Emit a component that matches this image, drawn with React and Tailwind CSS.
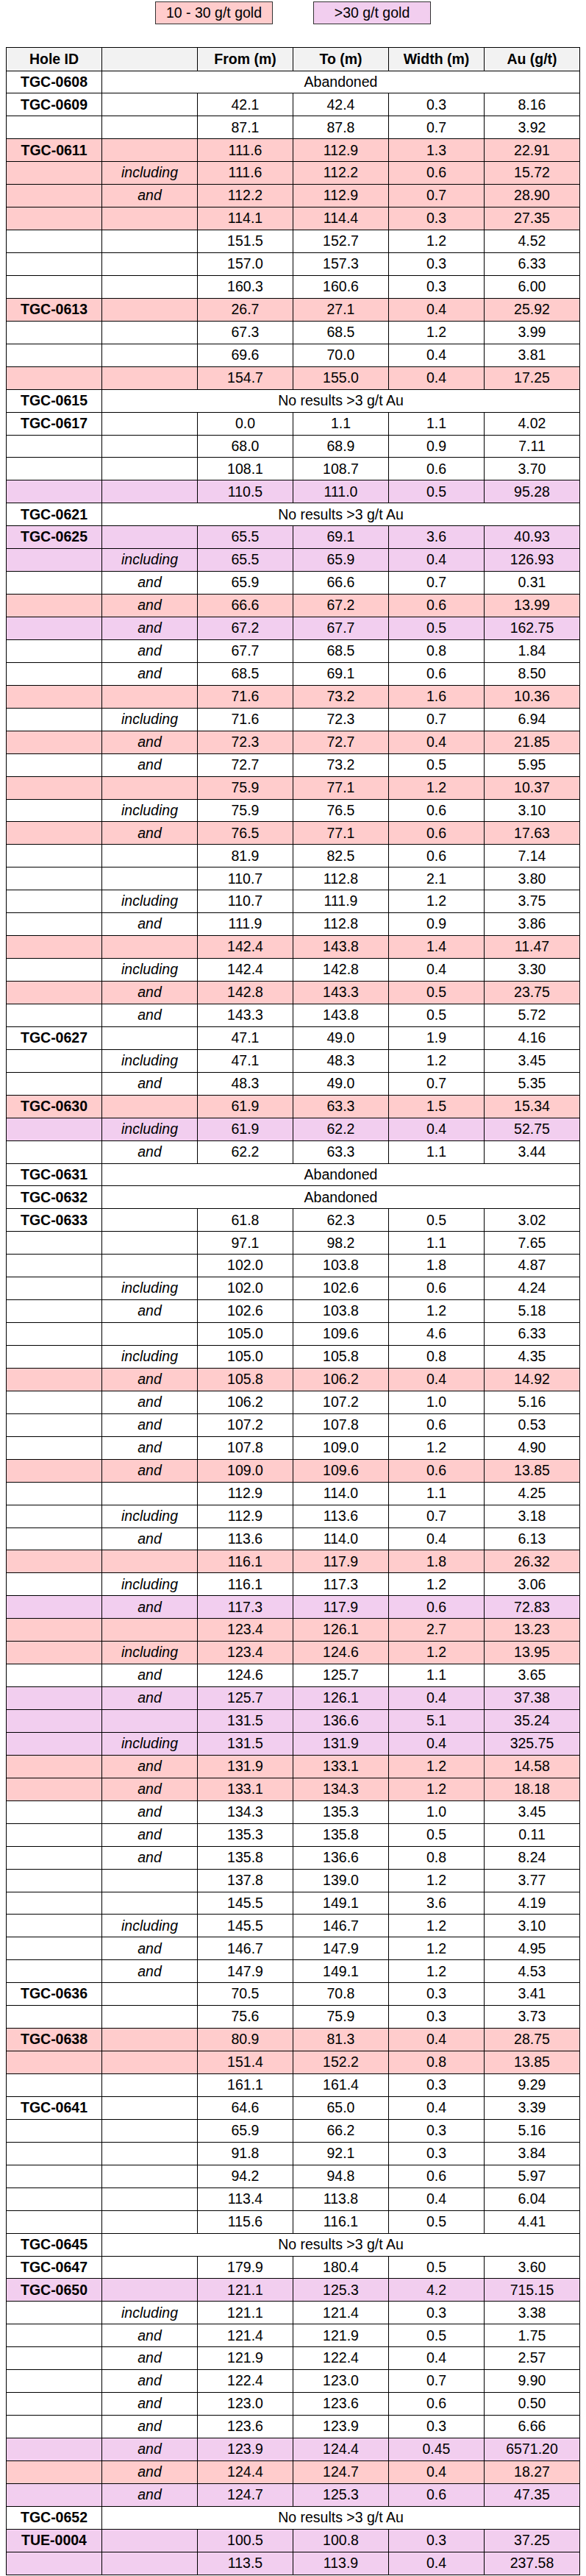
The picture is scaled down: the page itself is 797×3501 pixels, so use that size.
import React from "react";

// [hole, label, from, to, width, au, colour]  colour: p = 10-30 g/t, v = >30 g/t
// rows with a note instead of numbers: [hole, note]
const rows = [
  ["TGC-0608", "Abandoned"],
  ["TGC-0609", "", "42.1", "42.4", "0.3", "8.16", ""],
  ["", "", "87.1", "87.8", "0.7", "3.92", ""],
  ["TGC-0611", "", "111.6", "112.9", "1.3", "22.91", "p"],
  ["", "including", "111.6", "112.2", "0.6", "15.72", "p"],
  ["", "and", "112.2", "112.9", "0.7", "28.90", "p"],
  ["", "", "114.1", "114.4", "0.3", "27.35", "p"],
  ["", "", "151.5", "152.7", "1.2", "4.52", ""],
  ["", "", "157.0", "157.3", "0.3", "6.33", ""],
  ["", "", "160.3", "160.6", "0.3", "6.00", ""],
  ["TGC-0613", "", "26.7", "27.1", "0.4", "25.92", "p"],
  ["", "", "67.3", "68.5", "1.2", "3.99", ""],
  ["", "", "69.6", "70.0", "0.4", "3.81", ""],
  ["", "", "154.7", "155.0", "0.4", "17.25", "p"],
  ["TGC-0615", "No results >3 g/t Au"],
  ["TGC-0617", "", "0.0", "1.1", "1.1", "4.02", ""],
  ["", "", "68.0", "68.9", "0.9", "7.11", ""],
  ["", "", "108.1", "108.7", "0.6", "3.70", ""],
  ["", "", "110.5", "111.0", "0.5", "95.28", "v"],
  ["TGC-0621", "No results >3 g/t Au"],
  ["TGC-0625", "", "65.5", "69.1", "3.6", "40.93", "v"],
  ["", "including", "65.5", "65.9", "0.4", "126.93", "v"],
  ["", "and", "65.9", "66.6", "0.7", "0.31", ""],
  ["", "and", "66.6", "67.2", "0.6", "13.99", "p"],
  ["", "and", "67.2", "67.7", "0.5", "162.75", "v"],
  ["", "and", "67.7", "68.5", "0.8", "1.84", ""],
  ["", "and", "68.5", "69.1", "0.6", "8.50", ""],
  ["", "", "71.6", "73.2", "1.6", "10.36", "p"],
  ["", "including", "71.6", "72.3", "0.7", "6.94", ""],
  ["", "and", "72.3", "72.7", "0.4", "21.85", "p"],
  ["", "and", "72.7", "73.2", "0.5", "5.95", ""],
  ["", "", "75.9", "77.1", "1.2", "10.37", "p"],
  ["", "including", "75.9", "76.5", "0.6", "3.10", ""],
  ["", "and", "76.5", "77.1", "0.6", "17.63", "p"],
  ["", "", "81.9", "82.5", "0.6", "7.14", ""],
  ["", "", "110.7", "112.8", "2.1", "3.80", ""],
  ["", "including", "110.7", "111.9", "1.2", "3.75", ""],
  ["", "and", "111.9", "112.8", "0.9", "3.86", ""],
  ["", "", "142.4", "143.8", "1.4", "11.47", "p"],
  ["", "including", "142.4", "142.8", "0.4", "3.30", ""],
  ["", "and", "142.8", "143.3", "0.5", "23.75", "p"],
  ["", "and", "143.3", "143.8", "0.5", "5.72", ""],
  ["TGC-0627", "", "47.1", "49.0", "1.9", "4.16", ""],
  ["", "including", "47.1", "48.3", "1.2", "3.45", ""],
  ["", "and", "48.3", "49.0", "0.7", "5.35", ""],
  ["TGC-0630", "", "61.9", "63.3", "1.5", "15.34", "p"],
  ["", "including", "61.9", "62.2", "0.4", "52.75", "v"],
  ["", "and", "62.2", "63.3", "1.1", "3.44", ""],
  ["TGC-0631", "Abandoned"],
  ["TGC-0632", "Abandoned"],
  ["TGC-0633", "", "61.8", "62.3", "0.5", "3.02", ""],
  ["", "", "97.1", "98.2", "1.1", "7.65", ""],
  ["", "", "102.0", "103.8", "1.8", "4.87", ""],
  ["", "including", "102.0", "102.6", "0.6", "4.24", ""],
  ["", "and", "102.6", "103.8", "1.2", "5.18", ""],
  ["", "", "105.0", "109.6", "4.6", "6.33", ""],
  ["", "including", "105.0", "105.8", "0.8", "4.35", ""],
  ["", "and", "105.8", "106.2", "0.4", "14.92", "p"],
  ["", "and", "106.2", "107.2", "1.0", "5.16", ""],
  ["", "and", "107.2", "107.8", "0.6", "0.53", ""],
  ["", "and", "107.8", "109.0", "1.2", "4.90", ""],
  ["", "and", "109.0", "109.6", "0.6", "13.85", "p"],
  ["", "", "112.9", "114.0", "1.1", "4.25", ""],
  ["", "including", "112.9", "113.6", "0.7", "3.18", ""],
  ["", "and", "113.6", "114.0", "0.4", "6.13", ""],
  ["", "", "116.1", "117.9", "1.8", "26.32", "p"],
  ["", "including", "116.1", "117.3", "1.2", "3.06", ""],
  ["", "and", "117.3", "117.9", "0.6", "72.83", "v"],
  ["", "", "123.4", "126.1", "2.7", "13.23", "p"],
  ["", "including", "123.4", "124.6", "1.2", "13.95", "p"],
  ["", "and", "124.6", "125.7", "1.1", "3.65", ""],
  ["", "and", "125.7", "126.1", "0.4", "37.38", "v"],
  ["", "", "131.5", "136.6", "5.1", "35.24", "v"],
  ["", "including", "131.5", "131.9", "0.4", "325.75", "v"],
  ["", "and", "131.9", "133.1", "1.2", "14.58", "p"],
  ["", "and", "133.1", "134.3", "1.2", "18.18", "p"],
  ["", "and", "134.3", "135.3", "1.0", "3.45", ""],
  ["", "and", "135.3", "135.8", "0.5", "0.11", ""],
  ["", "and", "135.8", "136.6", "0.8", "8.24", ""],
  ["", "", "137.8", "139.0", "1.2", "3.77", ""],
  ["", "", "145.5", "149.1", "3.6", "4.19", ""],
  ["", "including", "145.5", "146.7", "1.2", "3.10", ""],
  ["", "and", "146.7", "147.9", "1.2", "4.95", ""],
  ["", "and", "147.9", "149.1", "1.2", "4.53", ""],
  ["TGC-0636", "", "70.5", "70.8", "0.3", "3.41", ""],
  ["", "", "75.6", "75.9", "0.3", "3.73", ""],
  ["TGC-0638", "", "80.9", "81.3", "0.4", "28.75", "p"],
  ["", "", "151.4", "152.2", "0.8", "13.85", "p"],
  ["", "", "161.1", "161.4", "0.3", "9.29", ""],
  ["TGC-0641", "", "64.6", "65.0", "0.4", "3.39", ""],
  ["", "", "65.9", "66.2", "0.3", "5.16", ""],
  ["", "", "91.8", "92.1", "0.3", "3.84", ""],
  ["", "", "94.2", "94.8", "0.6", "5.97", ""],
  ["", "", "113.4", "113.8", "0.4", "6.04", ""],
  ["", "", "115.6", "116.1", "0.5", "4.41", ""],
  ["TGC-0645", "No results >3 g/t Au"],
  ["TGC-0647", "", "179.9", "180.4", "0.5", "3.60", ""],
  ["TGC-0650", "", "121.1", "125.3", "4.2", "715.15", "v"],
  ["", "including", "121.1", "121.4", "0.3", "3.38", ""],
  ["", "and", "121.4", "121.9", "0.5", "1.75", ""],
  ["", "and", "121.9", "122.4", "0.4", "2.57", ""],
  ["", "and", "122.4", "123.0", "0.7", "9.90", ""],
  ["", "and", "123.0", "123.6", "0.6", "0.50", ""],
  ["", "and", "123.6", "123.9", "0.3", "6.66", ""],
  ["", "and", "123.9", "124.4", "0.45", "6571.20", "v"],
  ["", "and", "124.4", "124.7", "0.4", "18.27", "p"],
  ["", "and", "124.7", "125.3", "0.6", "47.35", "v"],
  ["TGC-0652", "No results >3 g/t Au"],
  ["TUE-0004", "", "100.5", "100.8", "0.3", "37.25", "v"],
  ["", "", "113.5", "113.9", "0.4", "237.58", "v"],
];

const bgs = { p: "bg-[#ffcccc]", v: "bg-[#f2ceef]", "": "bg-white" };

const cell = "flex items-center justify-center border-r border-black";

const Row = ({ r }) => {
  const [hole, label, from, to, width, au, colour] = r;
  if (r.length === 2) {
    return (
      <div className="grid grid-cols-[130px_650px] h-[30.94px] border-b border-black bg-white">
        <div className={`${cell} font-bold`}>{hole}</div>
        <div className={cell}>{label}</div>
      </div>
    );
  }
  return (
    <div className={`grid grid-cols-[130px_130px_130px_130px_130px_130px] h-[30.94px] border-b border-black ${bgs[colour]}`}>
      <div className={`${cell} font-bold`}>{hole}</div>
      <div className={`${cell} italic`}>{label}</div>
      <div className={cell}>{from}</div>
      <div className={cell}>{to}</div>
      <div className={cell}>{width}</div>
      <div className={cell}>{au}</div>
    </div>
  );
};

export default function App() {
  return (
    <div className="w-[797px] bg-white text-black text-[19.5px] leading-none font-['Liberation_Sans',Arial,sans-serif]">
      <div className="flex justify-center gap-[55px] pt-[2px]">
        <div className="w-[160px] h-[31px] flex items-center justify-center border border-[#333] bg-[#ffcccc]">
          10 - 30 g/t gold
        </div>
        <div className="w-[160px] h-[31px] flex items-center justify-center border border-[#333] bg-[#f2ceef]">
          &gt;30 g/t gold
        </div>
      </div>

      <div className="w-[781px] mx-auto mt-[31px] border-l border-t border-black">
        <div className="grid grid-cols-[130px_130px_130px_130px_130px_130px] h-[31.5px] border-b border-black bg-[#f2f2f2] font-bold">
          <div className={cell}>Hole ID</div>
          <div className={cell}></div>
          <div className={cell}>From (m)</div>
          <div className={cell}>To (m)</div>
          <div className={cell}>Width (m)</div>
          <div className={cell}>Au (g/t)</div>
        </div>
        {rows.map((r, i) => (
          <Row key={i} r={r} />
        ))}
      </div>
    </div>
  );
}
